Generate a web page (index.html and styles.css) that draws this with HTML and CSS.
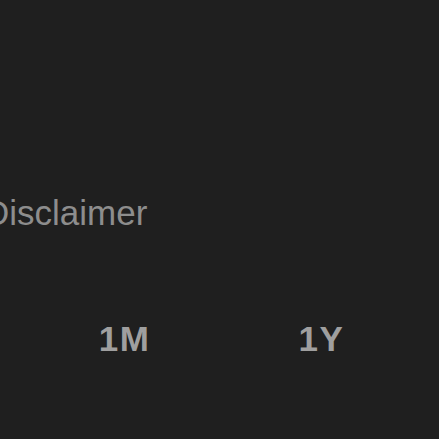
FILE: index.html
```html
<!DOCTYPE html>
<html lang="en">
<head>
  <meta charset="UTF-8">
  <meta name="viewport" content="width=device-width, initial-scale=1.0">
  <title>Chart ranges</title>
  <link rel="stylesheet" href="styles.css">
</head>
<body>
  <div class="screen">
    <a class="disclaimer" href="#">Disclaimer</a>
    <div class="ranges">
      <button class="range">1M</button>
      <button class="range">1Y</button>
    </div>
  </div>
</body>
</html>
```

FILE: styles.css
```css
html, body {
  margin: 0;
  height: 100%;
  background-color: #1f1f1f;
}
.screen {
  font-family: "Liberation Sans", Arial, sans-serif;
  padding-top: 189px;
  overflow: hidden;
  height: 100%;
  box-sizing: border-box;
}
.disclaimer {
  display: block;
  margin-left: -16px;
  font-size: 35px;
  line-height: 48px;
  color: #8d8d8d;
  text-decoration: none;
  white-space: nowrap;
}
.ranges {
  display: flex;
  margin-top: 78px;
  margin-left: 26px;
}
.range {
  width: 197px;
  padding: 0;
  border: none;
  background: none;
  font-family: inherit;
  font-size: 35px;
  font-weight: bold;
  letter-spacing: 1.5px;
  line-height: 48px;
  color: #9f9f9f;
  text-align: center;
}
```
